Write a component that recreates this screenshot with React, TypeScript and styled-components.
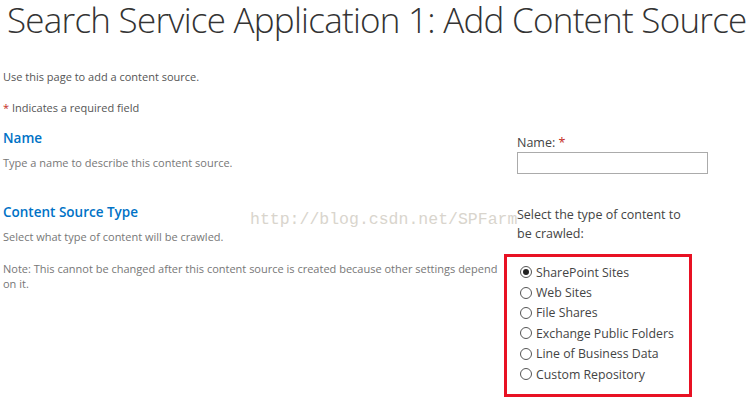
import styled, { createGlobalStyle } from "styled-components";

const GlobalStyle = createGlobalStyle`
  html, body {
    margin: 0;
    padding: 0;
    background: #fff;
  }
  body {
    font-family: "Open Sans", "Liberation Sans", sans-serif;
    color: #444;
  }
`;

const contentTypes = [
  "SharePoint Sites",
  "Web Sites",
  "File Shares",
  "Exchange Public Folders",
  "Line of Business Data",
  "Custom Repository",
];

function App() {
  return (
    <>
      <GlobalStyle />
      <Page>
        <PageTitle>Search Service Application 1: Add Content Source</PageTitle>
        <Intro>Use this page to add a content source.</Intro>
        <Required>
          <Star>*</Star> Indicates a required field
        </Required>

        <Section>
          <Left>
            <SectionHeading>Name</SectionHeading>
            <Description>Type a name to describe this content source.</Description>
          </Left>
          <Right $offset={4}>
            <FieldLabel>
              Name: <Star>*</Star>
            </FieldLabel>
            <TextBox />
          </Right>
        </Section>

        <Section $gap={29}>
          <Left>
            <SectionHeading>Content Source Type</SectionHeading>
            <Description>Select what type of content will be crawled.</Description>
            <Note>
              Note: This cannot be changed after this content source is created because other settings depend
              on it.
            </Note>
          </Left>
          <Right $offset={2}>
            <FieldLabel>
              Select the type of content to
              <br />
              be crawled:
            </FieldLabel>
            <Highlight>
              {contentTypes.map((type, index) => (
                <RadioRow key={type}>
                  <Radio $checked={index === 0} />
                  {type}
                </RadioRow>
              ))}
            </Highlight>
          </Right>
        </Section>

        <Watermark>http://blog.csdn.net/SPFarm</Watermark>
      </Page>
    </>
  );
}

const Page = styled.div`
  position: relative;
  width: 753px;
  height: 414px;
  overflow: hidden;
  padding: 0 0 0 3px;
  box-sizing: border-box;
`;

const PageTitle = styled.h1`
  margin: 0;
  padding: 0 0 0 4px;
  font-family: "Open Sans", sans-serif;
  font-weight: 300;
  font-size: 35px;
  line-height: 40px;
  color: #333;
  white-space: nowrap;
  letter-spacing: -0.75px;
`;

const Intro = styled.div`
  margin-top: 29px;
  font-size: 11px;
  line-height: 16px;
  color: #555;
`;

const Required = styled.div`
  margin-top: 15px;
  font-size: 11px;
  line-height: 16px;
  color: #555;
`;

const Star = styled.span`
  color: #c42b1c;
`;

const Section = styled.div<{ $gap?: number }>`
  display: grid;
  grid-template-columns: 514px 1fr;
  margin-top: ${(props) => props.$gap ?? 13}px;
`;

const Left = styled.div`
  display: flex;
  flex-direction: column;
`;

const Right = styled.div<{ $offset: number }>`
  display: flex;
  flex-direction: column;
  padding-top: ${(props) => props.$offset}px;
`;

const SectionHeading = styled.h3`
  margin: 0;
  font-size: 13.5px;
  line-height: 18px;
  font-weight: 600;
  color: #0072c6;
`;

const Description = styled.div`
  margin-top: 8px;
  font-size: 11px;
  line-height: 16px;
  color: #777;
`;

const Note = styled(Description)`
  margin-top: 16px;
  width: 502px;
  line-height: 15px;
`;

const FieldLabel = styled.div`
  font-size: 12.5px;
  line-height: 19px;
  color: #444;
`;

const TextBox = styled.div`
  width: 189px;
  height: 20px;
  border: 1px solid #ababab;
`;

const Highlight = styled.div`
  margin: 11px 0 0 -13px;
  width: 169px;
  padding: 5px 0 10px 13px;
  border: 3px solid #e81123;
  display: flex;
  flex-direction: column;
`;

const RadioRow = styled.div`
  display: flex;
  align-items: center;
  gap: 4px;
  height: 20.4px;
  font-size: 12.3px;
  color: #444;
  white-space: nowrap;
`;

const Radio = styled.span<{ $checked?: boolean }>`
  position: relative;
  width: 10px;
  height: 10px;
  border: 1px solid #555;
  border-radius: 50%;
  flex: none;
  &::after {
    content: "";
    display: ${(props) => (props.$checked ? "block" : "none")};
    position: absolute;
    left: 2px;
    top: 2px;
    width: 6px;
    height: 6px;
    border-radius: 50%;
    background: #222;
  }
`;

const Watermark = styled.div`
  position: absolute;
  left: 250px;
  top: 210px;
  font-family: "Liberation Mono", monospace;
  font-size: 16.5px;
  line-height: 20px;
  color: #d9d5cd;
  pointer-events: none;
  white-space: nowrap;
`;

export default App;
